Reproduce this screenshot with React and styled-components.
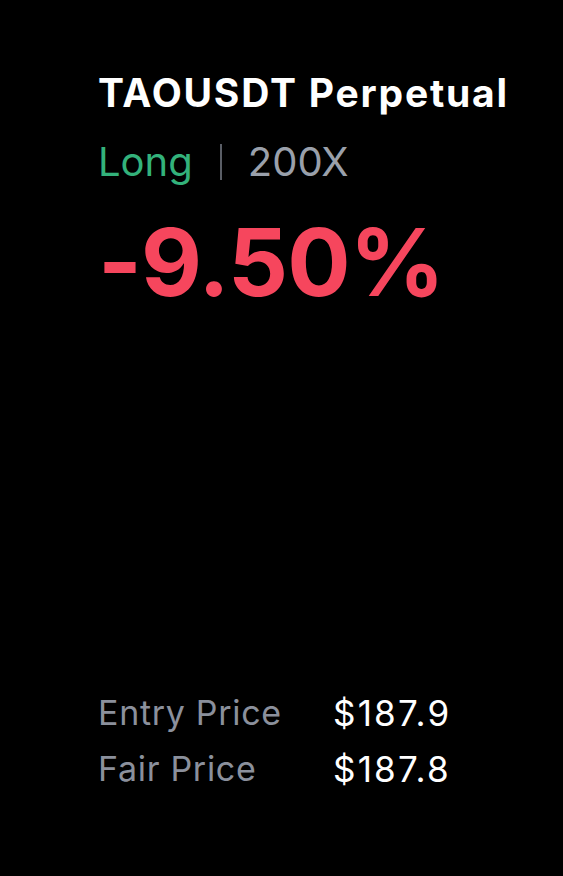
import styled, { createGlobalStyle } from "styled-components";

const GlobalStyle = createGlobalStyle`
    html, body {
        margin: 0;
        padding: 0;
        background: #000;
    }
    body {
        font-family: Inter, "Noto Sans", sans-serif;
        -webkit-font-smoothing: antialiased;
    }
`

const prices = [
    { label: "Entry Price", value: "$187.9" },
    { label: "Fair Price", value: "$187.8" },
];

export default function App() {
    return (
        <>
            <GlobalStyle />
            <Card>
                <Header>
                    <Symbol>TAOUSDT Perpetual</Symbol>
                    <Meta>
                        <Side>Long</Side>
                        <Divider />
                        <Leverage>200X</Leverage>
                    </Meta>
                    <Roe $negative>-9.50%</Roe>
                </Header>

                <PriceGrid>
                    {prices.map((p) => (
                        <PriceRow key={p.label}>
                            <PriceLabel>{p.label}</PriceLabel>
                            <PriceValue>{p.value}</PriceValue>
                        </PriceRow>
                    ))}
                </PriceGrid>
            </Card>
        </>
    );
}

const Card = styled.main`
    box-sizing: border-box;
    height: 876px;
    padding: 70px 0 79px 98px;
    display: flex;
    flex-direction: column;
    justify-content: space-between;
    background: #000;
`

const Header = styled.header`
    display: flex;
    flex-direction: column;
`

const Symbol = styled.h1`
    margin: 0;
    font-size: 39px;
    line-height: 46px;
    font-weight: 700;
    color: #fff;
    letter-spacing: 1.8px;
`

const Meta = styled.div`
    margin-top: 22px;
    display: flex;
    align-items: center;
    font-size: 40px;
    line-height: 48px;
    font-weight: 400;
`

const Side = styled.span`
    color: #33b27b;
`

const Divider = styled.span`
    display: inline-block;
    width: 2px;
    height: 36px;
    margin: 0 26px 0 27px;
    background: #5a5e66;
`

const Leverage = styled.span`
    color: #9aa0ab;
`

const Roe = styled.div`
    margin-top: 19px;
    font-size: 94px;
    line-height: 114px;
    font-weight: 700;
    letter-spacing: -1px;
    color: ${(p) => (p.$negative ? "#f6465d" : "#33b27b")};
`

const PriceGrid = styled.section`
    display: flex;
    flex-direction: column;
`

const PriceRow = styled.div`
    display: grid;
    grid-template-columns: 235px auto;
    font-size: 34px;
    line-height: 56px;
`

const PriceLabel = styled.span`
    color: #8b909c;
    letter-spacing: 0.7px;
`

const PriceValue = styled.span`
    color: #fff;
    font-size: 35px;
    letter-spacing: 2.2px;
`
